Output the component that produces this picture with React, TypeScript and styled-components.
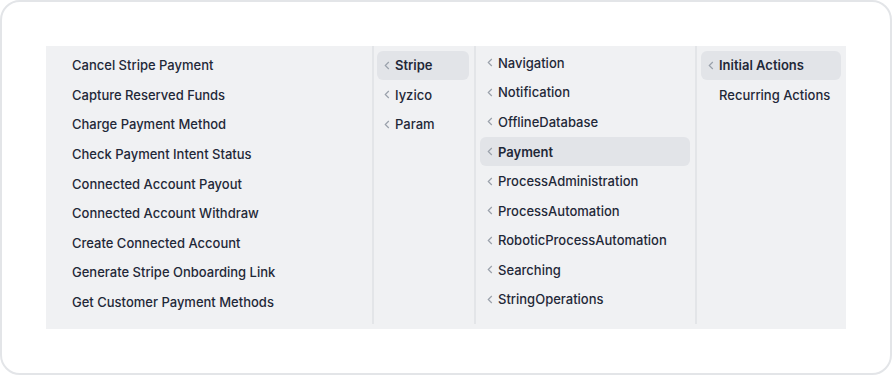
import styled, { createGlobalStyle } from 'styled-components';

const GlobalStyle = createGlobalStyle`
  html, body {
    margin: 0;
    padding: 0;
    background: #ffffff;
    font-family: Inter, "Noto Sans", sans-serif;
  }
  * {
    box-sizing: border-box;
  }
`;

const Card = styled.div`
  width: 892px;
  height: 375px;
  border: 2px solid #e3e5e8;
  border-radius: 20px;
  padding: 44px;
  background: #ffffff;
`;

const Browser = styled.div`
  display: flex;
  height: 283px;
  padding-bottom: 5px;
  background: #f0f1f3;
`;

const Column = styled.div<{ $width?: number; $padLeft?: number; $offset?: number; $last?: boolean }>`
  flex: ${(p) => (p.$width ? `0 0 ${p.$width}px` : '1 1 auto')};
  height: 100%;
  overflow: hidden;
  border-right: ${(p) => (p.$last ? 'none' : '2px solid #e3e5e8')};
  padding: ${(p) => 4.6 - (p.$offset || 0)}px 5px 0 ${(p) => p.$padLeft ?? 4}px;
`;

const Item = styled.div<{ $active?: boolean }>`
  display: flex;
  align-items: center;
  gap: 5px;
  height: 29.55px;
  padding: 0 8px 0 7px;
  border-radius: 6px;
  background: ${(p) => (p.$active ? '#e2e4e8' : 'transparent')};
  color: #1f2838;
  font-size: 13px;
  font-weight: ${(p) => (p.$active ? 600 : 500)};
  white-space: nowrap;
`;

const Chevron = styled.span`
  display: inline-flex;
  width: 6px;
  height: 10px;
  align-items: center;
  justify-content: center;
  flex: 0 0 6px;
`;

const Arrow = ({ show }: { show: boolean }) => (
  <Chevron>
    {show && (
      <svg width="6" height="9" viewBox="0 0 6 9">
        <polyline points="4.8,1 1.3,4.5 4.8,8" fill="none" stroke="#9aa1ab" strokeWidth="1.2" />
      </svg>
    )}
  </Chevron>
);

const actions = [
  'Cancel Stripe Payment',
  'Capture Reserved Funds',
  'Charge Payment Method',
  'Check Payment Intent Status',
  'Connected Account Payout',
  'Connected Account Withdraw',
  'Create Connected Account',
  'Generate Stripe Onboarding Link',
  'Get Customer Payment Methods',
];

const providers = ['Stripe', 'Iyzico', 'Param'];

const categories = [
  'Navigation',
  'Notification',
  'OfflineDatabase',
  'Payment',
  'ProcessAdministration',
  'ProcessAutomation',
  'RoboticProcessAutomation',
  'Searching',
  'StringOperations',
  'UIComponents',
];

export default function App() {
  return (
    <>
      <GlobalStyle />
      <Card>
        <Browser>
          <Column $width={328} $padLeft={8}>
            {actions.map((a) => (
              <Item key={a}>
                <Arrow show={false} />
                {a}
              </Item>
            ))}
          </Column>
          <Column $width={102} $padLeft={3}>
            {providers.map((p) => (
              <Item key={p} $active={p === 'Stripe'}>
                <Arrow show />
                {p}
              </Item>
            ))}
          </Column>
          <Column $width={221} $offset={2.5}>
            {categories.map((c) => (
              <Item key={c} $active={c === 'Payment'}>
                <Arrow show />
                {c}
              </Item>
            ))}
          </Column>
          <Column $last>
            <Item $active>
              <Arrow show />
              Initial Actions
            </Item>
            <Item>
              <Arrow show={false} />
              Recurring Actions
            </Item>
          </Column>
        </Browser>
      </Card>
    </>
  );
}
